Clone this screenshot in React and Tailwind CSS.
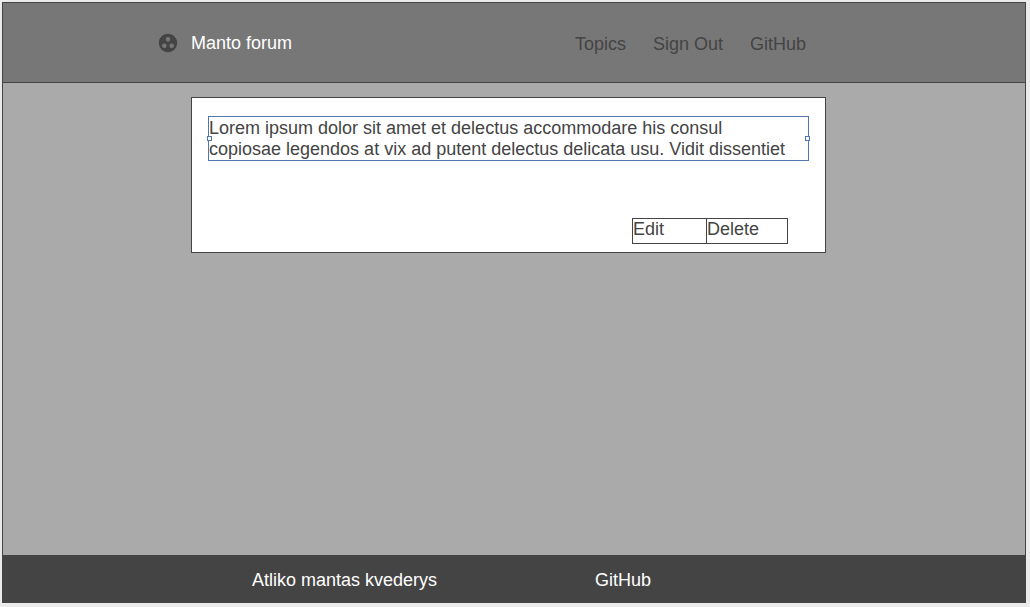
import { MdGroupWork } from "react-icons/md";

function Header() {
  return (
    <header className="flex h-20 shrink-0 items-center border-b border-[#444444] bg-[#777777] pl-[154px]">
      <div className="flex w-[418px] shrink-0 items-center gap-3">
        <MdGroupWork className="size-[22px] text-[#444444]" aria-hidden="true" />
        <span className="pt-0.5 text-white">Manto forum</span>
      </div>
      <nav className="flex items-center gap-[27px] pt-1 text-[#444444]">
        <a href="#topics">Topics</a>
        <a href="#sign-out">Sign Out</a>
        <a href="#github">GitHub</a>
      </nav>
    </header>
  );
}

function Handle({ side }) {
  return (
    <span
      className={`absolute top-[19px] size-[5px] border border-[#4f76b3] bg-white ${
        side === "left" ? "-left-0.5" : "-right-0.5"
      }`}
    />
  );
}

function Post() {
  return (
    <article className="flex w-full max-w-[635px] flex-col border border-[#444444] bg-white px-4 pt-[18px] pb-2 text-[#444444]">
      <div className="relative border border-[#4f76b3] pt-px">
        <p>
          Lorem ipsum dolor sit amet et delectus accommodare his consul
          <br />
          copiosae legendos at vix ad putent delectus delicata usu. Vidit dissentiet
        </p>
        <Handle side="left" />
        <Handle side="right" />
      </div>
      <div className="mt-[57px] mr-[21px] flex self-end border border-[#444444]">
        <button type="button" className="h-6 w-[73px] pb-1 text-left">
          Edit
        </button>
        <button type="button" className="h-6 w-[81px] border-l border-[#444444] pb-1 text-left">
          Delete
        </button>
      </div>
    </article>
  );
}

function Footer() {
  return (
    <footer className="flex h-[47px] shrink-0 items-center bg-[#444444] pt-1 pl-[249px] text-white">
      <span className="w-[343px] shrink-0">Atliko mantas kvederys</span>
      <a href="#github">GitHub</a>
    </footer>
  );
}

export default function App() {
  return (
    <div className="flex min-h-screen flex-col bg-[#ebebeb] pt-0.5 pr-1 pb-1 pl-0.5 font-['Liberation_Sans',Arial,sans-serif] text-[18px] leading-[21px]">
      <div className="flex grow flex-col border border-[#444444] bg-[#aaaaaa]">
        <Header />
        <main className="grow pt-3.5 pl-[188px]">
          <Post />
        </main>
        <Footer />
      </div>
    </div>
  );
}
